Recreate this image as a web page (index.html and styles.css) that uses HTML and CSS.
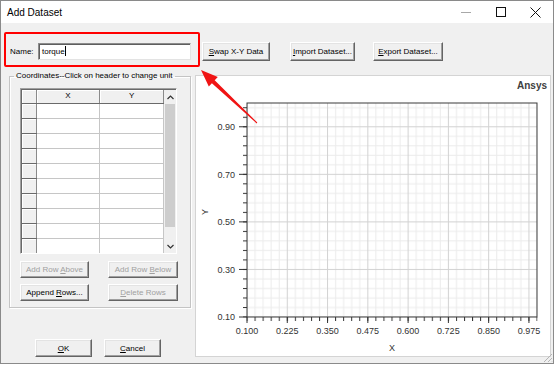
FILE: index.html
```html
<!DOCTYPE html>
<html lang="en">

  <head>
    <meta charset="UTF-8">
    <title>Add Dataset</title>
    <link rel="stylesheet" href="styles.css">
  </head>

  <body>
    <div class="window">
      <div class="titlebar">
        <span class="title">Add Dataset</span>
        <div class="caption">
          <span class="cap">
            <svg width="10" height="10" viewBox="0 0 10 10"><path d="M0 5.5h10" stroke="#a8a8a8" /></svg>
          </span>
          <span class="cap">
            <svg width="10" height="10" viewBox="0 0 10 10"><rect x="0.5" y="0.5" width="9" height="9" fill="none" stroke="#111" /></svg>
          </span>
          <span class="cap">
            <svg width="11" height="11" viewBox="0 0 11 11"><path d="M0.5 0.5L10.5 10.5M10.5 0.5L0.5 10.5" stroke="#111" /></svg>
          </span>
        </div>
      </div>

      <div class="client">
        <div class="toprow">
          <label class="name-label">Name:</label>
          <div class="textbox">torque<span class="caret"></span></div>
          <button class="btn btn-swap"><u>S</u>wap X-Y Data</button>
          <button class="btn btn-import"><u>I</u>mport Dataset...</button>
          <button class="btn btn-export"><u>E</u>xport Dataset...</button>
        </div>

        <div class="main">
          <div class="left">
            <fieldset class="coords">
              <legend>Coordinates--Click on header to change unit</legend>
              <div class="sheet">
                <div class="sheet-inner">
                  <table class="cells">
                    <thead>
                      <tr><th class="corner"></th><th>X</th><th>Y</th></tr>
                    </thead>
                    <tbody>
                      <tr><th class="rowhead"></th><td></td><td></td></tr>
                      <tr><th class="rowhead"></th><td></td><td></td></tr>
                      <tr><th class="rowhead"></th><td></td><td></td></tr>
                      <tr><th class="rowhead"></th><td></td><td></td></tr>
                      <tr><th class="rowhead"></th><td></td><td></td></tr>
                      <tr><th class="rowhead"></th><td></td><td></td></tr>
                      <tr><th class="rowhead"></th><td></td><td></td></tr>
                      <tr><th class="rowhead"></th><td></td><td></td></tr>
                      <tr><th class="rowhead"></th><td></td><td></td></tr>
                      <tr><th class="rowhead"></th><td></td><td></td></tr>
                    </tbody>
                  </table>
                  <div class="vscroll">
                    <span class="arrow-btn">
                      <svg width="7" height="5" viewBox="0 0 7 5"><path d="M0.5 4L3.5 1L6.5 4" fill="none" stroke="#333" stroke-width="1.2" /></svg>
                    </span>
                    <span class="thumb"></span>
                    <span class="track"></span>
                    <span class="arrow-btn">
                      <svg width="7" height="5" viewBox="0 0 7 5"><path d="M0.5 1L3.5 4L6.5 1" fill="none" stroke="#333" stroke-width="1.2" /></svg>
                    </span>
                  </div>
                </div>
              </div>
              <div class="row-buttons">
                <button class="btn btn-row" disabled>Add Row <u>A</u>bove</button>
                <button class="btn btn-row btn-row-right" disabled>Add Row <u>B</u>elow</button>
              </div>
              <div class="row-buttons">
                <button class="btn btn-row">Append <u>R</u>ows...</button>
                <button class="btn btn-row btn-row-right" disabled><u>D</u>elete Rows</button>
              </div>
            </fieldset>
            <div class="dialog-buttons">
              <button class="btn btn-dialog"><u>O</u>K</button>
              <button class="btn btn-dialog btn-cancel"><u>C</u>ancel</button>
            </div>
          </div>

          <div class="chart-panel">
            <svg class="chart" width="354" height="280" viewBox="196 76 354 280" xmlns="http://www.w3.org/2000/svg">
              <defs>
                <pattern id="grid" patternUnits="userSpaceOnUse" x="246.5" y="316.5" width="40.2778" height="47.5556">
                  <rect width="40.2778" height="47.5556" fill="#fff" />
                  <rect x="8.0556" width="1" height="47.5556" fill="#ececec" />
                  <rect x="16.1111" width="1" height="47.5556" fill="#ececec" />
                  <rect x="24.1667" width="1" height="47.5556" fill="#ececec" />
                  <rect x="32.2222" width="1" height="47.5556" fill="#ececec" />
                  <rect y="9.5111" width="40.2778" height="1" fill="#ececec" />
                  <rect y="19.0222" width="40.2778" height="1" fill="#ececec" />
                  <rect y="28.5333" width="40.2778" height="1" fill="#ececec" />
                  <rect y="38.0444" width="40.2778" height="1" fill="#ececec" />
                  <rect width="1" height="47.5556" fill="#d2d2d2" />
                  <rect width="40.2778" height="1" fill="#d2d2d2" />
                </pattern>
                <pattern id="xtick" patternUnits="userSpaceOnUse" x="246.5" y="317" width="8.0556" height="4">
                  <rect width="1" height="4" fill="#333" />
                </pattern>
                <pattern id="ytick" patternUnits="userSpaceOnUse" x="243" y="316.5" width="4" height="9.5111">
                  <rect width="4" height="1" fill="#333" />
                </pattern>
              </defs>

              <text x="547" y="89" class="brand" text-anchor="end">Ansys</text>

              <!-- plot area, x 0.1..1.0, y 0.1..1.0 -->
              <rect x="247" y="103" width="290" height="214" fill="url(#grid)" />
              <rect x="247" y="103" width="290" height="214" fill="none" stroke="#3a3a3a" />

              <rect x="246.5" y="317" width="291" height="4" fill="url(#xtick)" />
              <rect x="243" y="102.5" width="4" height="215" fill="url(#ytick)" />
              <path d="M247 317v6M287.28 317v6M327.56 317v6M367.83 317v6M408.11 317v6M448.39 317v6M488.67 317v6M528.94 317v6" stroke="#333" />
              <path d="M239 317h8M239 269.44h8M239 221.89h8M239 174.33h8M239 126.78h8" stroke="#333" />

              <g class="ticklabel" text-anchor="end">
                <text x="235" y="320.2">0.10</text>
                <text x="235" y="272.6">0.30</text>
                <text x="235" y="225.1">0.50</text>
                <text x="235" y="177.5">0.70</text>
                <text x="235" y="130">0.90</text>
              </g>
              <g class="ticklabel" text-anchor="middle">
                <text x="247" y="334">0.100</text>
                <text x="287.28" y="334">0.225</text>
                <text x="327.56" y="334">0.350</text>
                <text x="367.83" y="334">0.475</text>
                <text x="408.11" y="334">0.600</text>
                <text x="448.39" y="334">0.725</text>
                <text x="488.67" y="334">0.850</text>
                <text x="528.94" y="334">0.975</text>
              </g>
              <text class="axis-title" transform="translate(208,212) rotate(-90)" text-anchor="middle">Y</text>
              <text class="axis-title" x="392" y="351" text-anchor="middle">X</text>
            </svg>
          </div>
        </div>
      </div>

      <svg class="grip" width="12" height="12" viewBox="0 0 12 12">
        <path d="M11 3L3 11M11 7L7 11M11 10.5L10.5 11" stroke="#b5b5b5" />
      </svg>

      <!-- annotation drawn over the dialog -->
      <div class="highlight"></div>
      <svg class="annotation" width="554" height="365" viewBox="0 0 554 365">
        <polygon points="201,70 217.8,77 214.7,80.2 257.3,122.6 256.7,123.4 211.9,83.2 208.8,86.4" fill="#f01414" />
      </svg>
    </div>
  </body>
</html>
```

FILE: styles.css
```css
* {
  box-sizing: border-box;
}

body {
  margin: 0;
  background: #fff;
  font-family: "Liberation Sans", Arial, sans-serif;
  font-size: 8px;
  color: #000;
}

.window {
  position: relative;
  width: 554px;
  height: 364px;
  border: 1px solid #8a8a8a;
  background: #f0f0f0;
  overflow: hidden;
}

.titlebar {
  height: 22px;
  background: #fff;
  display: flex;
  align-items: center;
  justify-content: space-between;
}

.title {
  padding-left: 6px;
  font-size: 10px;
}

.caption {
  display: flex;
}

.cap {
  width: 35px;
  height: 22px;
  display: flex;
  align-items: center;
  justify-content: center;
}

/* top row */
.toprow {
  display: flex;
  align-items: center;
  height: 19px;
  margin-top: 19px;
  padding-left: 9px;
}

.name-label {
  width: 28px;
}

.textbox {
  width: 153px;
  height: 17px;
  background: #fff;
  border: 1px solid;
  border-color: #8c8c8c #e3e3e3 #e3e3e3 #8c8c8c;
  box-shadow: inset 1px 1px 0 #5e5e5e;
  padding: 3px 0 0 3px;
  display: flex;
  align-items: flex-start;
}

.caret {
  width: 1px;
  height: 10px;
  margin-top: -1px;
  background: #000;
}

.btn {
  font: inherit;
  color: #000;
  background: #f0f0f0;
  border: 1px solid;
  border-color: #fff #646464 #646464 #fff;
  box-shadow: inset -1px -1px 0 #a0a0a0, inset 1px 1px 0 #e3e3e3;
  padding: 0;
  height: 19px;
  white-space: nowrap;
}

.btn:disabled {
  color: #a0a0a0;
}

.btn-swap {
  width: 68px;
  margin-left: 11px;
}

.btn-import {
  width: 65px;
  margin-left: 20px;
}

.btn-export {
  width: 70px;
  margin-left: 18px;
}

/* main area */
.main {
  display: flex;
  margin-top: 10px;
}

.left {
  width: 182px;
  margin-left: 8px;
}

.coords {
  width: 182px;
  margin: 0;
  padding: 7px 10px 6px 10px;
  border: 1px solid #c4c4c4;
  box-shadow: 1px 1px 0 #fff, inset 1px 1px 0 #fff;
}

.coords legend {
  margin-left: -6px;
  padding: 0 2px;
  line-height: 10px;
}

.sheet {
  width: 157px;
  height: 166px;
  border: 1px solid;
  border-color: #a0a0a0 #fff #fff #a0a0a0;
  overflow: hidden;
}

.sheet-inner {
  display: flex;
  height: 100%;
  border-top: 1px solid #696969;
  border-left: 1px solid #696969;
  background: #fff;
}

.cells {
  border-collapse: collapse;
  table-layout: fixed;
  width: 143px;
}

.cells th {
  height: 13px;
  padding: 0;
  background: #f0f0f0;
  font-weight: normal;
  border-right: 1px solid #8a8a8a;
  border-bottom: 1px solid #6a6a6a;
  box-shadow: inset 1px 1px 0 #fff;
  line-height: 12px;
}

.cells th.corner {
  width: 14px;
}

.cells th.rowhead {
  height: 15px;
}

.cells td {
  height: 15px;
  padding: 0;
  border-right: 1px solid #c6c6c6;
  border-bottom: 1px solid #c6c6c6;
}

.vscroll {
  width: 12px;
  display: flex;
  flex-direction: column;
  background: #f0f0f0;
}

.arrow-btn {
  height: 14px;
  display: flex;
  align-items: center;
  justify-content: center;
}

.thumb {
  height: 123px;
  margin: 0 1px;
  background: #cdcdcd;
}

.track {
  flex: 1;
}

.row-buttons {
  display: flex;
  margin-top: 7px;
}

.row-buttons + .row-buttons {
  margin-top: 6px;
}

.btn-row {
  width: 69px;
  height: 17px;
}

.btn-row-right {
  width: 70px;
  margin-left: 19px;
}

.dialog-buttons {
  display: flex;
  margin: 31px 0 0 26px;
}

.btn-dialog {
  width: 57px;
  height: 18px;
}

.btn-cancel {
  margin-left: 12px;
}

/* chart */
.chart-panel {
  width: 356px;
  height: 282px;
  margin: 4px 0 0 4px;
  background: #fff;
  border: 1px solid #d4d4d4;
}

.chart {
  display: block;
}

.chart text {
  font-family: "Liberation Sans", Arial, sans-serif;
  fill: #333;
}

.ticklabel {
  font-size: 9px;
}

.axis-title {
  font-size: 9px;
}

.chart .brand {
  font-size: 10px;
  font-weight: bold;
  fill: #404040;
}

.grip {
  position: absolute;
  right: 0;
  bottom: 0;
}

/* red call-out over the name field */
.highlight {
  position: absolute;
  left: 3px;
  top: 31px;
  width: 196px;
  height: 35px;
  border: 2px solid #f00;
  border-radius: 2px;
}

.annotation {
  position: absolute;
  left: -1px;
  top: -1px;
  pointer-events: none;
}
```
